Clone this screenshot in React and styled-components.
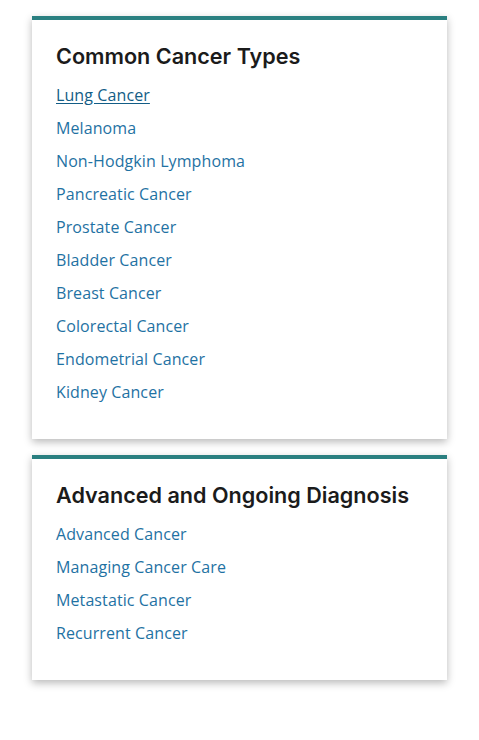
import React from "react";
import styled, { createGlobalStyle } from "styled-components";

const Global = createGlobalStyle`
  html, body { margin: 0; padding: 0; background: #fff; }
  body { font-family: "Open Sans", "Noto Sans", sans-serif; }
`;

const Page = styled.div`
  display: flex;
  flex-direction: column;
  gap: 16px;
  padding: 16px 32px;
  width: 415px;
`;

const Card = styled.section`
  background: #fff;
  border-top: 4px solid #2a7f80;
  box-shadow: 0 3px 8px rgba(0, 0, 0, 0.28);
  padding: 21px 24px 31px;
`;

const Heading = styled.h2`
  margin: 0 0 7px;
  font-family: "Inter", "Noto Sans", sans-serif;
  font-weight: 600;
  font-size: 21.6px;
  line-height: 30px;
  color: #1b1b1b;
`;

const List = styled.ul`
  list-style: none;
  margin: 0;
  padding: 0;
`;

const Item = styled.li`
  height: 33px;
  display: flex;
  align-items: center;
`;

const Link = styled.a`
  font-family: "Open Sans", sans-serif;
  font-size: 16px;
  line-height: 22px;
  letter-spacing: 0.1px;
  color: ${(p) => (p.$active ? "#135d86" : "#1f72a3")};
  text-decoration: ${(p) => (p.$active ? "underline" : "none")};
  text-underline-offset: 2px;
`;

const sections = [
  {
    title: "Common Cancer Types",
    links: [
      "Lung Cancer",
      "Melanoma",
      "Non-Hodgkin Lymphoma",
      "Pancreatic Cancer",
      "Prostate Cancer",
      "Bladder Cancer",
      "Breast Cancer",
      "Colorectal Cancer",
      "Endometrial Cancer",
      "Kidney Cancer",
    ],
  },
  {
    title: "Advanced and Ongoing Diagnosis",
    links: [
      "Advanced Cancer",
      "Managing Cancer Care",
      "Metastatic Cancer",
      "Recurrent Cancer",
    ],
  },
];

export default function App() {
  return (
    <>
      <Global />
      <Page>
        {sections.map((s, si) => (
          <Card key={s.title}>
            <Heading>{s.title}</Heading>
            <List>
              {s.links.map((l, li) => (
                <Item key={l}>
                  <Link href="#" $active={si === 0 && li === 0}>
                    {l}
                  </Link>
                </Item>
              ))}
            </List>
          </Card>
        ))}
      </Page>
    </>
  );
}
